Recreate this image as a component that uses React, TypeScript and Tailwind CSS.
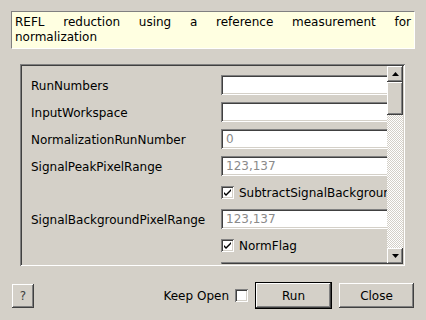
const raised =
  'shadow-[inset_-1px_-1px_0_#404040,inset_1px_1px_0_#ffffff,inset_-2px_-2px_0_#808080,inset_2px_2px_0_#d4d0c8]';
const sunken =
  'shadow-[inset_1px_1px_0_#808080,inset_-1px_-1px_0_#ffffff,inset_2px_2px_0_#404040,inset_-2px_-2px_0_#d4d0c8]';

const Field: React.FC<{ label: string; value?: string }> = ({ label, value }) => (
  <div className="flex items-center h-[20px] shrink-0">
    <div className="w-[190px] shrink-0 pt-[1px]">{label}</div>
    <div className={`w-[200px] shrink-0 h-[20px] bg-white pl-[5px] flex items-center text-[#8a8a8a] ${sunken}`}>
      {value}
    </div>
  </div>
);

const Check: React.FC<{ checked?: boolean }> = ({ checked }) => (
  <div className={`w-[13px] h-[13px] bg-white shrink-0 flex items-center justify-center ${sunken}`}>
    {checked && (
      <svg width="7" height="7" viewBox="0 0 7 7">
        <path d="M0 3 L0 5 L2 7 L7 2 L7 0 L2 5 Z" fill="#000" />
      </svg>
    )}
  </div>
);

const CheckRow: React.FC<{ label: string }> = ({ label }) => (
  <div className="flex items-center h-[19px] shrink-0">
    <div className="w-[190px] shrink-0" />
    <div className="flex items-center gap-[5px] whitespace-nowrap shrink-0">
      <Check checked />
      <span>{label}</span>
    </div>
  </div>
);

const Arrow: React.FC<{ down?: boolean }> = ({ down }) => (
  <div className={`w-[16px] h-[16px] bg-[#d4d0c8] flex items-center justify-center shrink-0 ${raised}`}>
    <svg width="7" height="4" viewBox="0 0 7 4">
      <path d={down ? 'M0 0 H7 L3.5 4 Z' : 'M0 4 H7 L3.5 0 Z'} fill="#000" />
    </svg>
  </div>
);

export default function App() {
  return (
    <div
      className="w-[426px] h-[320px] bg-[#d4d0c8] text-[12px] text-black pt-[11px] overflow-hidden"
      style={{ fontFamily: '"DejaVu Sans", Verdana, sans-serif' }}
    >
      <div className="mx-[11px] h-[38px] bg-[#ffffe1] border border-t-[#808080] border-l-[#808080] border-b-white border-r-white px-[3px] pt-[3px] leading-[15px]">
        <div className="text-justify [text-align-last:justify]">REFL reduction using a reference measurement for</div>
        <div>normalization</div>
      </div>

      <div className={`ml-[20px] mr-[21px] mt-[15px] h-[202px] p-[2px] flex ${sunken}`}>
        <div className="flex-1 overflow-hidden pl-[9px] pt-[9px] flex flex-col gap-[7px]">
          <Field label="RunNumbers" />
          <Field label="InputWorkspace" />
          <Field label="NormalizationRunNumber" value="0" />
          <Field label="SignalPeakPixelRange" value="123,137" />
          <CheckRow label="SubtractSignalBackground" />
          <Field label="SignalBackgroundPixelRange" value="123,137" />
          <CheckRow label="NormFlag" />
          <Field label="" />
        </div>
        <div className="w-[16px] flex flex-col">
          <Arrow />
          <div className={`h-[33px] bg-[#d4d0c8] shrink-0 ${raised}`} />
          <div className="flex-1 bg-[repeating-conic-gradient(#ffffff_0_25%,#d4d0c8_0_50%)] bg-[length:2px_2px]" />
          <Arrow down />
        </div>
      </div>

      <div className="mt-[16px] px-[12px] flex items-center justify-between">
        <div className={`w-[22px] h-[24px] bg-[#d4d0c8] flex items-center justify-center text-[#404040] ${raised}`}>
          ?
        </div>
        <div className="flex items-center">
          <span className="mr-[6px]">Keep Open</span>
          <Check />
          <div className="ml-[7px] w-[77px] h-[27px] border border-black">
            <div className={`w-full h-full bg-[#d4d0c8] flex items-center justify-center ${raised}`}>Run</div>
          </div>
          <div className={`ml-[7px] w-[75px] h-[25px] bg-[#d4d0c8] flex items-center justify-center ${raised}`}>
            Close
          </div>
        </div>
      </div>
    </div>
  );
}
